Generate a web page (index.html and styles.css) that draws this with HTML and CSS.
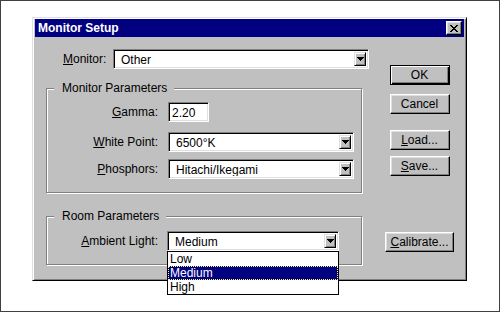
FILE: index.html
```html
<!DOCTYPE html>
<html>
<head>
<meta charset="utf-8">
<link rel="stylesheet" href="styles.css">
</head>
<body>
<div class="frame">
  <div class="dialog">
    <div class="titlebar">
      <span class="title">Monitor Setup</span>
      <span class="close"><svg width="8" height="7" viewBox="0 0 8 7"><path d="M0 0h2v1H0zM6 0h2v1H6zM1 1h2v1H1zM5 1h2v1H5zM2 2h4v1H2zM3 3h2v1H3zM2 4h4v1H2zM1 5h2v1H1zM5 5h2v1H5zM0 6h2v1H0zM6 6h2v1H6z" fill="#000"/></svg></span>
    </div>
    <div class="body">
      <div class="left">
        <div class="monitor-row">
          <span class="lbl-monitor"><u>M</u>onitor:</span>
          <div class="combo combo-monitor"><span class="val">Other</span><span class="dd"><svg width="7" height="4" viewBox="0 0 7 4"><path d="M0 0h7v1H0zM1 1h5v1H1zM2 2h3v1H2zM3 3h1v1H3z" fill="#000"/></svg></span></div>
        </div>
        <div class="group group-monitor">
          <div class="legend"><span>Monitor Parameters</span></div>
          <div class="fields fields-monitor">
            <div class="field">
              <span class="lbl"><u>G</u>amma:</span>
              <div class="edit">2.20</div>
            </div>
            <div class="field field-wp">
              <span class="lbl"><u>W</u>hite Point:</span>
              <div class="combo combo-wide"><span class="val">6500°K</span><span class="dd"><svg width="7" height="4" viewBox="0 0 7 4"><path d="M0 0h7v1H0zM1 1h5v1H1zM2 2h3v1H2zM3 3h1v1H3z" fill="#000"/></svg></span></div>
            </div>
            <div class="field field-ph">
              <span class="lbl"><u>P</u>hosphors:</span>
              <div class="combo combo-wide"><span class="val">Hitachi/Ikegami</span><span class="dd"><svg width="7" height="4" viewBox="0 0 7 4"><path d="M0 0h7v1H0zM1 1h5v1H1zM2 2h3v1H2zM3 3h1v1H3z" fill="#000"/></svg></span></div>
            </div>
          </div>
        </div>
        <div class="group group-room">
          <div class="legend"><span>Room Parameters</span></div>
          <div class="fields fields-room">
            <div class="field">
              <span class="lbl lbl-amb"><u>A</u>mbient Light:</span>
              <div class="combo-wrap">
                <div class="combo combo-amb"><span class="val">Medium</span><span class="dd"><svg width="7" height="4" viewBox="0 0 7 4"><path d="M0 0h7v1H0zM1 1h5v1H1zM2 2h3v1H2zM3 3h1v1H3z" fill="#000"/></svg></span></div>
                <div class="list">
                  <div class="item">Low</div>
                  <div class="item item-sel">Medium</div>
                  <div class="item">High</div>
                </div>
              </div>
            </div>
          </div>
        </div>
      </div>
      <div class="right">
        <div class="btn btn-default btn-ok">OK</div>
        <div class="btn btn-cancel">Cancel</div>
        <div class="btn btn-load"><u>L</u>oad...</div>
        <div class="btn btn-save"><u>S</u>ave...</div>
        <div class="btn btn-cal"><u>C</u>alibrate...</div>
      </div>
    </div>
  </div>
</div>
</body>
</html>
```
FILE: styles.css
```css
html, body {
  margin: 0;
  background: #fff;
}
body {
  font-family: "Liberation Sans", Arial, sans-serif;
  font-size: 12px;
  color: #000;
}
u {
  text-decoration: underline;
  text-underline-offset: 1px;
}
.frame {
  width: 500px;
  height: 312px;
  box-sizing: border-box;
  border: 1px solid #404040;
  background: #fff;
  padding: 16px 0 0 31px;
}
.dialog {
  width: 435px;
  height: 264px;
  box-sizing: border-box;
  background: #c0c0c0;
  border: 1px solid;
  border-color: #dfdfdf #000 #000 #dfdfdf;
  box-shadow: inset 1px 1px 0 #fff, inset -1px -1px 0 #808080;
  padding: 1px 2px 2px 2px;
}
.titlebar {
  height: 18px;
  background: #000080;
  color: #fff;
  font-weight: bold;
  font-size: 12px;
  display: flex;
  align-items: center;
  justify-content: space-between;
  padding: 0 2px 0 3px;
}
.title {
  line-height: 15px;
}
.close {
  width: 16px;
  height: 14px;
  box-sizing: border-box;
  background: #c0c0c0;
  border: 1px solid;
  border-color: #fff #000 #000 #fff;
  box-shadow: inset -1px -1px 0 #808080, inset 1px 1px 0 #dfdfdf;
  display: flex;
  align-items: center;
  justify-content: center;
}
.close svg, .dd svg {
  display: block;
  shape-rendering: crispEdges;
}
.body {
  display: flex;
  padding: 12px 0 0 11px;
}
.left {
  width: 323px;
}
.monitor-row {
  display: flex;
  align-items: center;
  padding-left: 17px;
}
.lbl-monitor {
  width: 50px;
}
.combo {
  height: 20px;
  box-sizing: border-box;
  border: 1px solid;
  border-color: #808080 #fff #fff #808080;
  box-shadow: inset 1px 1px 0 #000, inset -1px -1px 0 #dfdfdf;
  background: #fff;
  display: flex;
  align-items: stretch;
  padding: 2px;
}
.val {
  flex: 1;
  padding-left: 5px;
  line-height: 16px;
  white-space: nowrap;
  overflow: hidden;
}
.dd {
  width: 12px;
  box-sizing: border-box;
  background: #c0c0c0;
  border: 1px solid;
  border-color: #dfdfdf #000 #000 #dfdfdf;
  box-shadow: inset 1px 1px 0 #fff, inset -1px -1px 0 #808080;
  display: flex;
  align-items: center;
  justify-content: center;
}
.combo-monitor {
  width: 256px;
}
.combo-wide {
  width: 186px;
}
.combo-amb {
  width: 172px;
}
.group {
  width: 316px;
  box-sizing: border-box;
  border: 1px solid #808080;
  box-shadow: inset 1px 1px 0 #fff, 1px 1px 0 #fff;
  padding-bottom: 13px;
}
.group-monitor {
  margin-top: 19px;
}
.group-room {
  margin-top: 23px;
}
.legend {
  display: flex;
  height: 14px;
  margin-top: -8px;
  margin-left: 7px;
}
.legend span {
  background: #c0c0c0;
  padding: 0 7px 0 8px;
  line-height: 14px;
}
.fields-monitor {
  padding-top: 7px;
}
.fields-room {
  padding-top: 8px;
}
.field {
  display: flex;
  align-items: center;
  height: 20px;
}
.field-wp {
  margin-top: 10px;
}
.field-ph {
  margin-top: 7px;
}
.lbl {
  width: 111px;
  text-align: right;
  margin-right: 10px;
}
.lbl-amb {
  margin-right: 9px;
}
.edit {
  width: 41px;
  height: 20px;
  box-sizing: border-box;
  border: 1px solid;
  border-color: #808080 #fff #fff #808080;
  box-shadow: inset 1px 1px 0 #000, inset -1px -1px 0 #dfdfdf;
  background: #fff;
  padding: 2px 2px 0 3px;
  line-height: 16px;
}
.combo-wrap {
  position: relative;
}
.list {
  position: absolute;
  top: 100%;
  left: 0;
  width: 172px;
  box-sizing: border-box;
  border: 1px solid #000;
  background: #fff;
}
.item {
  height: 14px;
  line-height: 14px;
  padding-left: 2px;
  box-sizing: border-box;
}
.item-sel {
  background: #000080;
  color: #fff;
  border: 1px dotted #ffff80;
  padding-left: 1px;
  line-height: 12px;
}
.right {
  margin-left: 16px;
  width: 69px;
  display: flex;
  flex-direction: column;
  align-items: center;
}
.btn {
  width: 60px;
  height: 20px;
  box-sizing: border-box;
  background: #c0c0c0;
  border: 1px solid;
  border-color: #fff #000 #000 #fff;
  box-shadow: inset -1px -1px 0 #808080, inset 1px 1px 0 #dfdfdf;
  display: flex;
  align-items: center;
  justify-content: center;
  line-height: 14px;
}
.btn-default {
  border: 1px solid #000;
  box-shadow: inset 1px 1px 0 #fff, inset -1px -1px 0 #000, inset -2px -2px 0 #808080;
}
.btn-ok {
  margin-top: 16px;
}
.btn-cancel {
  margin-top: 9px;
}
.btn-load {
  margin-top: 16px;
}
.btn-save {
  margin-top: 6px;
}
.btn-cal {
  width: 69px;
  margin-top: 56px;
}
```
